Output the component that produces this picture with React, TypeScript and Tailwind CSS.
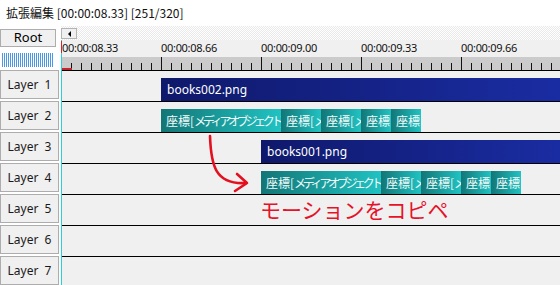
const timeLabels = ['00:00:08.33', '00:00:08.66', '00:00:09.00', '00:00:09.33', '00:00:09.66'];
const segWidths = ['w-[120px]', 'w-[40px]', 'w-[40px]', 'w-[30px]', 'w-[30px]'];

function Ruler() {
  const ticks = Array.from({ length: 50 }, (_, i) => 9 + i * 10);
  return (
    <svg width="498" height="13" className="block">
      {ticks.map((x) => {
        const major = x >= 99 && (x - 99) % 100 === 0;
        return <rect key={x} x={x} y={major ? 0 : 6} width="1" height={major ? 13 : 7} fill="#111" />;
      })}
      <rect x="0" y="11" width="10" height="2" fill="#c8232c" />
    </svg>
  );
}

function BlueClip({ name }: { name: string }) {
  return (
    <div className="h-[23px] flex-1 flex items-center pl-[6px] bg-[linear-gradient(90deg,#0f196b,#1a2ca2)] text-white text-[12px] [font-family:'Noto_Sans',sans-serif] overflow-hidden whitespace-nowrap">
      {name}
    </div>
  );
}

function MotionClips() {
  return (
    <div className="flex h-[23px]">
      {segWidths.map((w, i) => (
        <div
          key={i}
          className={`${w} h-full flex items-center pl-[5px] bg-[linear-gradient(90deg,#137676,#21c2c2)] text-[#f2fbfb] text-[12px] [font-family:'Noto_Sans_CJK_JP',sans-serif] overflow-hidden whitespace-nowrap`}
        >
          座標[<span className="tracking-[-3.3px]">メディアオブジェクト</span>]
        </div>
      ))}
    </div>
  );
}

function TrackRow({ pad, children }: { pad?: string; children?: React.ReactNode }) {
  return (
    <div className={`h-[31px] border-t border-black bg-[#f0f0f0] flex items-end ${pad ?? ''}`}>
      {children}
    </div>
  );
}

export default function App() {
  const layers = [1, 2, 3, 4, 5, 6, 7];
  return (
    <div className="relative w-[560px] h-[285px] overflow-hidden bg-white text-black [font-family:'Noto_Sans_CJK_JP',sans-serif]">
      {/* title */}
      <div className="h-[26px] pl-[6px] flex items-center text-[12px] text-[#111]">
        拡張編集 [00:00:08.33] [251/320]
      </div>

      <div className="flex">
        {/* layer names */}
        <div className="w-[59px] shrink-0">
          <div className="h-[44px] pt-[3px]">
            <div className="w-[56px] h-[18px] bg-[#f0f0f0] border border-[#adadad] flex items-center justify-center text-[13px] [font-family:'Noto_Sans',sans-serif]">
              Root
            </div>
            <div className="mt-[6px] ml-[2px] w-[51px] h-[14px] bg-[repeating-linear-gradient(90deg,#4b98e6_0px,#4b98e6_1px,#ffffff_1px,#ffffff_2px)]" />
          </div>
          {layers.map((n) => (
            <div key={n} className="h-[31px]">
              <div className="h-[29px] bg-[#f0f0f0] border border-[#adadad] flex items-center justify-center text-[12px] text-[#1a1a1a] [font-family:'Noto_Sans',sans-serif] whitespace-pre">
                {`Layer  ${n}`}
              </div>
            </div>
          ))}
        </div>

        <div className="w-[2px] shrink-0" />

        {/* timeline */}
        <div className="flex-1">
          <div className="h-[14px] pt-[2px] bg-[repeating-conic-gradient(#ffffff_0%_25%,#e9e9e9_0%_50%)] bg-[length:2px_2px]">
            <div className="w-[16px] h-[11px] bg-[#f0f0f0] border border-[#b4b4b4] flex items-center justify-center">
              <div className="w-0 h-0 border-y-[3px] border-y-transparent border-r-[3px] border-r-black" />
            </div>
          </div>
          <div className="flex">
            <div className="w-px shrink-0 bg-[#22d3de] pt-[1px]">
              <div className="h-[12px] bg-[#e02020]" />
            </div>
            <div className="flex-1">
              <div className="h-[17px] bg-[#f0f0f0] flex items-center text-[11px] [font-family:'Noto_Sans',sans-serif] tracking-[-0.3px] text-[#111]">
                {timeLabels.map((t, i) => (
                  <div key={t} className={i === 0 ? 'w-[99px]' : 'w-[100px]'}>
                    {t}
                  </div>
                ))}
              </div>
              <div className="h-[13px] bg-[#cbcbcb]">
                <Ruler />
              </div>
              <TrackRow pad="pl-[99px]">
                <BlueClip name="books002.png" />
              </TrackRow>
              <TrackRow pad="pl-[99px]">
                <MotionClips />
              </TrackRow>
              <TrackRow pad="pl-[199px]">
                <BlueClip name="books001.png" />
              </TrackRow>
              <TrackRow pad="pl-[199px]">
                <MotionClips />
              </TrackRow>
              <TrackRow />
              <TrackRow />
              <TrackRow />
            </div>
          </div>
        </div>
      </div>

      {/* annotation */}
      <svg className="absolute left-0 top-0 pointer-events-none" width="560" height="285">
        <path d="M210 136 C211 165, 215 185, 246 183" fill="none" stroke="#e3101f" strokeWidth="2.6" strokeLinecap="round" />
        <path d="M237 174 L247 183 L235 191" fill="none" stroke="#e3101f" strokeWidth="2.6" strokeLinecap="round" strokeLinejoin="round" />
      </svg>
      <div className="absolute left-[260px] top-[197px] text-[21px] leading-[24px] text-[#e5122a] [font-family:'Noto_Sans_CJK_JP',sans-serif] whitespace-nowrap">
        モーションをコピペ
      </div>
    </div>
  );
}
